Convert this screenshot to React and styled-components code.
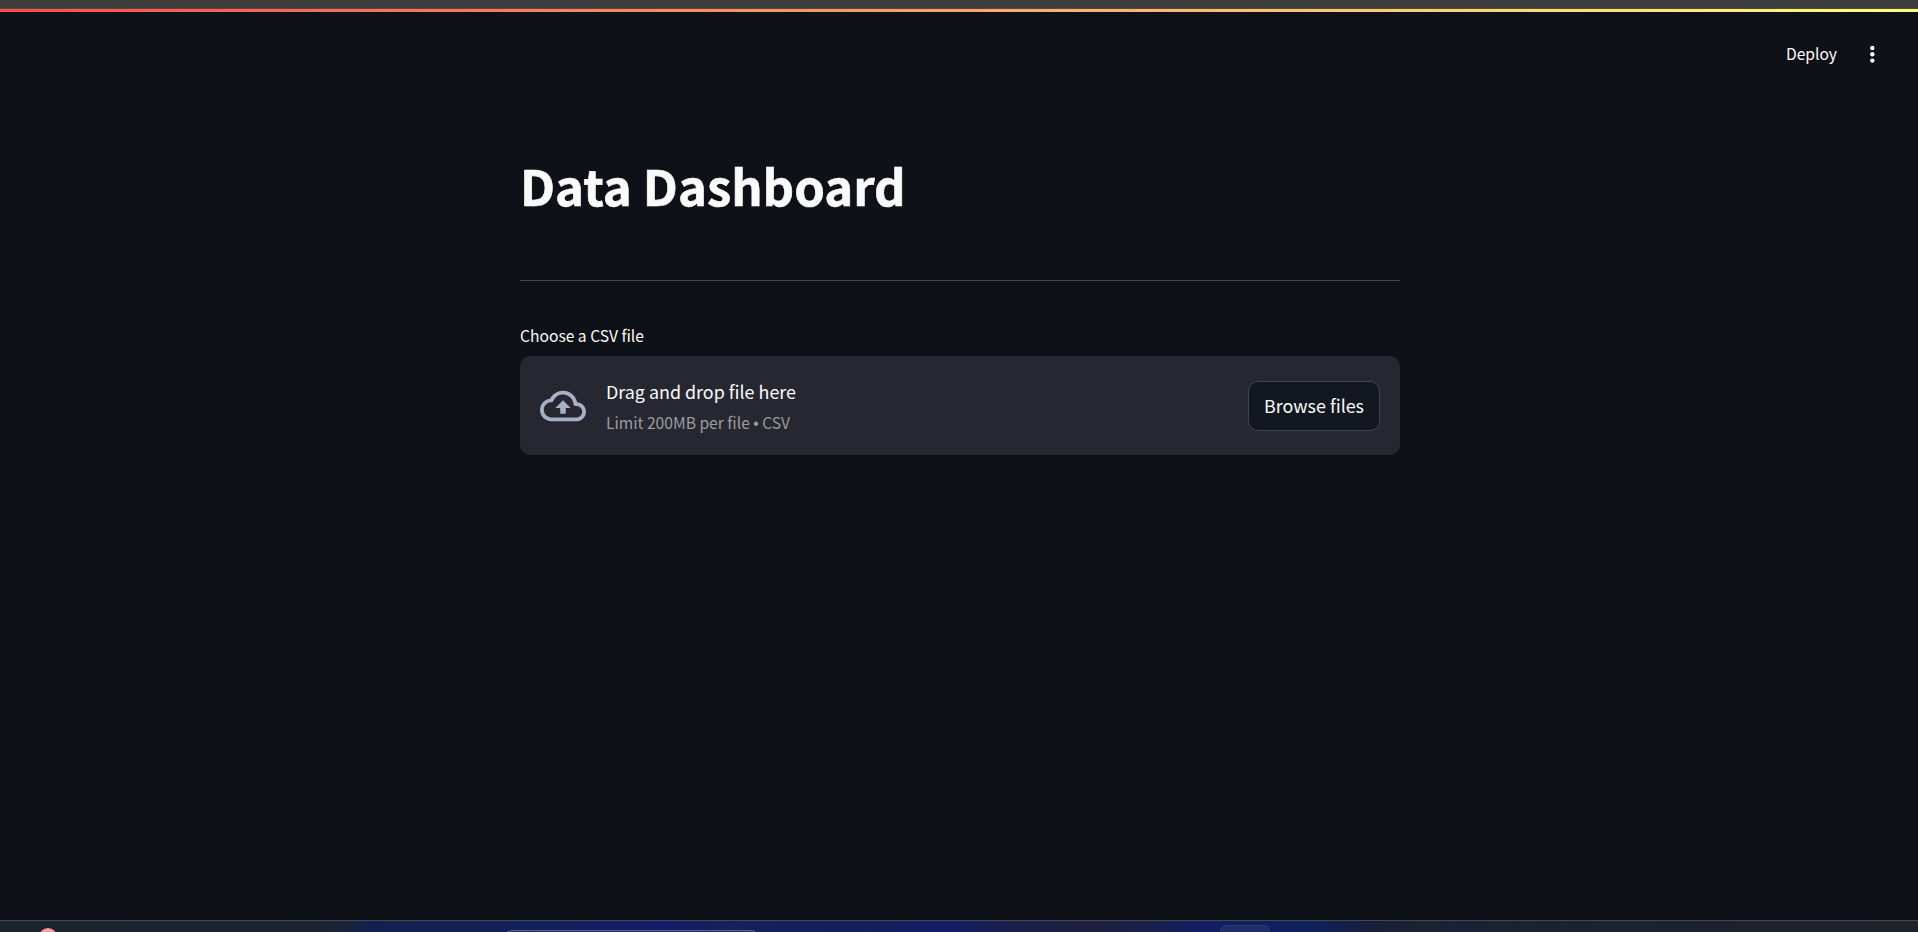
import React from "react";
import styled, { createGlobalStyle } from "styled-components";
import { MdOutlineCloudUpload } from "react-icons/md";

const GlobalStyle = createGlobalStyle`
  *, *::before, *::after { box-sizing: border-box; }
  body {
    margin: 0;
    overflow: hidden;
    background: #0e1117;
    color: #fafafa;
    font-family: "Source Sans Pro", "Noto Sans CJK SC", "Open Sans", sans-serif;
  }
`;

const Screen = styled.div`
  display: flex;
  flex-direction: column;
  height: 932px;
  overflow: hidden;
`;

const WindowEdge = styled.div`
  flex: none;
  height: 9px;
  background: #3c3c3c;
  border-bottom: 1px solid #474b4a;
`;

const Decoration = styled.div`
  flex: none;
  height: 3px;
  background: linear-gradient(90deg, #ff4b4b, #fffd80);
`;

const Toolbar = styled.header`
  flex: none;
  display: flex;
  align-items: center;
  justify-content: flex-end;
  gap: 31px;
  height: 84px;
  padding-right: 42px;
`;

const Text = styled.span`
  display: block;
  white-space: nowrap;
  font-size: ${(p) => p.$size}px;
  line-height: ${(p) => p.$line}px;
  color: ${(p) => p.$color || "#fafafa"};
`;

const Bullet = styled.span`
  font-family: "Liberation Sans", sans-serif;
  line-height: 1;
`;

const Page = styled.main`
  flex: 1;
  width: 880px;
  margin-left: 520px;
  padding-top: 53px;
`;

const Title = styled.h1`
  margin: 0;
  height: 72px;
  font-size: 49.1px;
  line-height: 72px;
  font-weight: 700;
  -webkit-text-stroke: 0.6px #fafafa;
  white-space: nowrap;
`;

const Divider = styled.hr`
  margin: 59px 0 42px;
  height: 1px;
  border: 0;
  background: #41444c;
`;

const Dropzone = styled.section`
  display: flex;
  align-items: center;
  height: 99px;
  margin-top: 8px;
  padding: 0 20px;
  border-radius: 10px;
  background: #262730;
`;

const UploadIcon = styled(MdOutlineCloudUpload)`
  flex: none;
  width: 46px;
  height: 46px;
  margin: 1px 20px 0 0;
  color: #a9afc4;
`;

const Instructions = styled.div`
  flex: 1;
  display: flex;
  flex-direction: column;
  gap: 1px;
  padding-top: 1px;
`;

const BrowseButton = styled.button`
  display: flex;
  align-items: center;
  justify-content: center;
  width: 132px;
  height: 50px;
  margin: 1px 0 0;
  padding: 0 0 2px;
  border: 1px solid #41444c;
  border-radius: 10px;
  background: #131720;
  font-family: inherit;
`;

const Taskbar = styled.footer`
  flex: none;
  position: relative;
  height: 12px;
  overflow: hidden;
  border-top: 1px solid #464752;
  background: linear-gradient(
    90deg,
    #1d232d 0, #1c232e 310px, #192439 342px, #11214f 372px, #11215a 540px,
    #131c6a 660px, #13225a 730px, #12205a 860px, #131d66 950px,
    #1a1f4a 1010px, #1e1f3d 1090px, #19204c 1150px, #111f62 1200px,
    #101f60 1260px, #0f2158 1320px, #191f38 1375px, #1d2230 1425px,
    #1a2138 1450px, #1b222f 1520px, #1e222b 1918px
  );
`;

const Badge = styled.span`
  position: absolute;
  left: 39px;
  top: 7px;
  width: 18px;
  height: 18px;
  border-radius: 50%;
  background: #ff9ba5;
`;

const SearchPill = styled.span`
  position: absolute;
  left: 504px;
  top: 9px;
  width: 255px;
  height: 40px;
  border: 1px solid #5a618e;
  border-radius: 8px;
  background: #283061;
`;

const ActiveApp = styled.span`
  position: absolute;
  left: 1220px;
  top: 4px;
  width: 50px;
  height: 48px;
  border: 1px solid #2c3b70;
  border-radius: 6px;
  background: #202e68;
`;

export default function App() {
  return (
    <>
      <GlobalStyle />
      <Screen>
        <WindowEdge />
        <Decoration />
        <Toolbar>
          <Text $size={15.63} $line={24}>Deploy</Text>
          <svg width="8" height="20" viewBox="0 0 8 20" fill="#fafafa">
            <circle cx="4.3" cy="4" r="2.2" />
            <circle cx="4.3" cy="10.3" r="2.2" />
            <circle cx="4.3" cy="16.6" r="2.2" />
          </svg>
        </Toolbar>
        <Page>
          <Title>Data Dashboard</Title>
          <Divider />
          <Text $size={15.63} $line={25}>Choose a CSV file</Text>
          <Dropzone>
            <UploadIcon />
            <Instructions>
              <Text $size={17.9} $line={32}>Drag and drop file here</Text>
              <Text $size={15.63} $line={29} $color="#9c9d9f">
                Limit 200MB per file <Bullet>•</Bullet> CSV
              </Text>
            </Instructions>
            <BrowseButton>
              <Text $size={17.9} $line={32}>Browse files</Text>
            </BrowseButton>
          </Dropzone>
        </Page>
        <Taskbar>
          <Badge />
          <SearchPill />
          <ActiveApp />
        </Taskbar>
      </Screen>
    </>
  );
}
